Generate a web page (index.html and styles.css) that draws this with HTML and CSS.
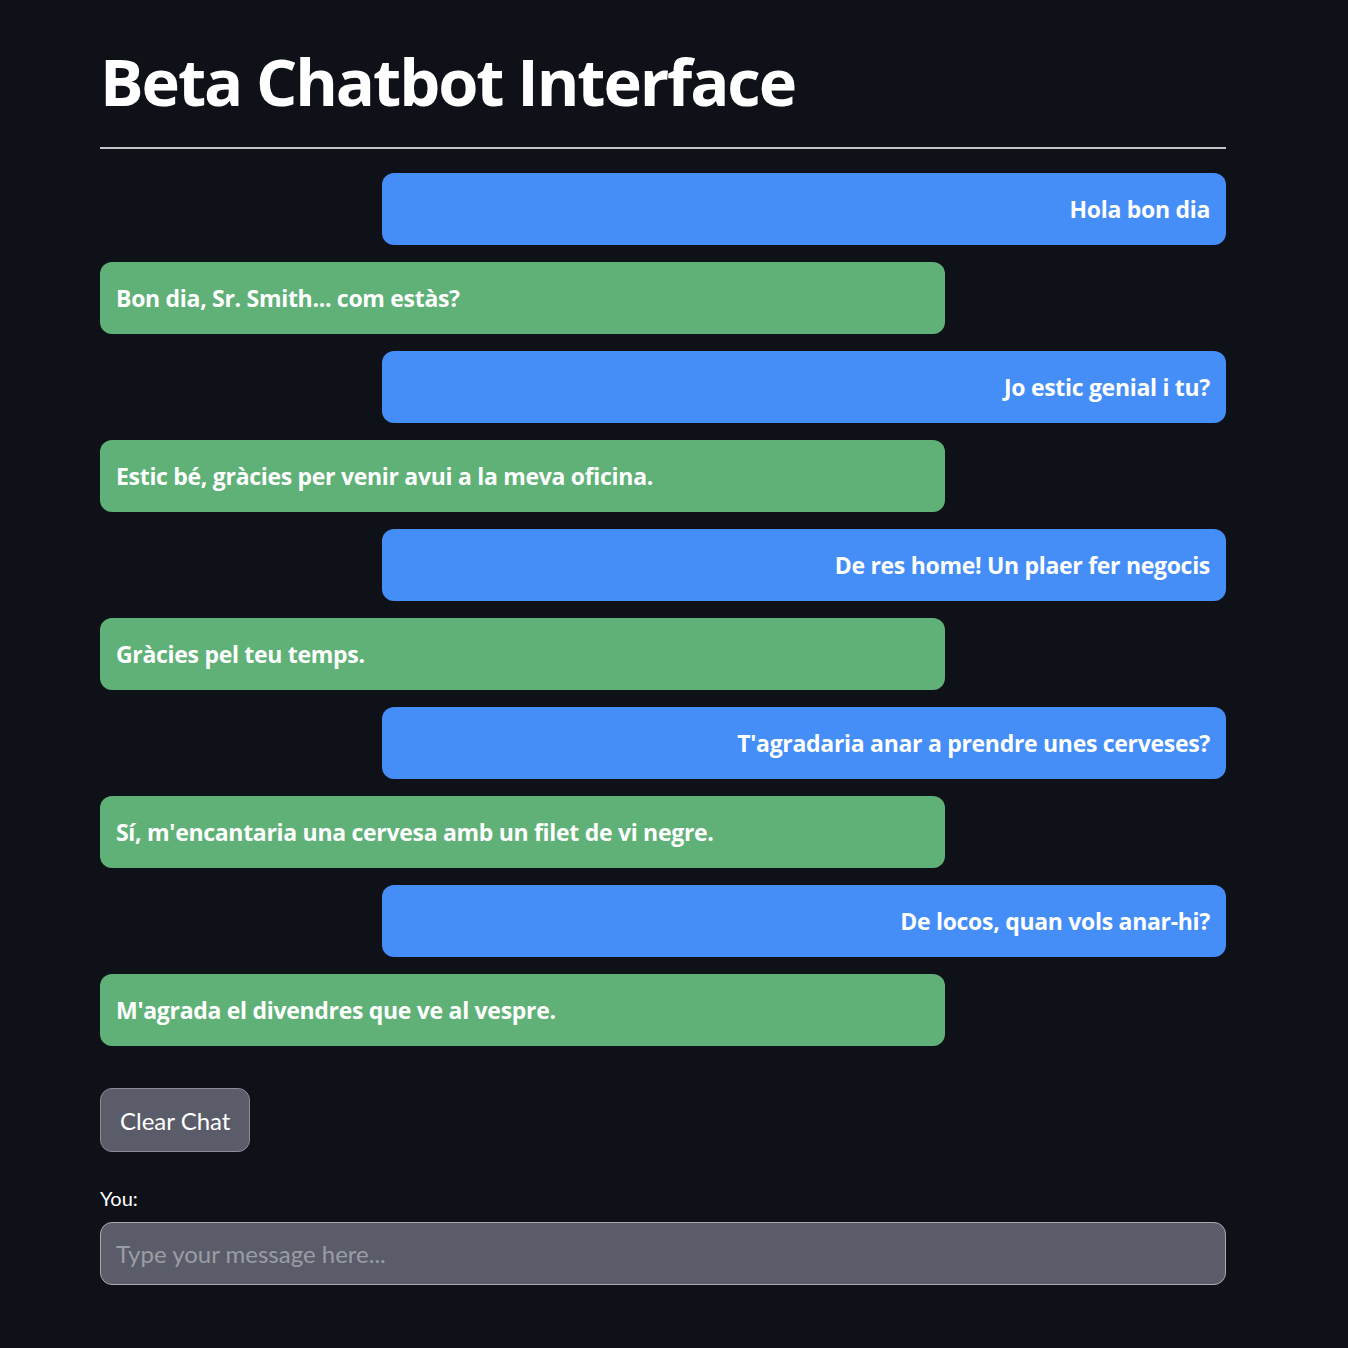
FILE: index.html
```html
<!DOCTYPE html>
<html lang="ca">
<head>
<meta charset="utf-8">
<title>Beta Chatbot Interface</title>
<link rel="stylesheet" href="styles.css">
</head>
<body>
<main class="app">
  <h1 class="title">Beta Chatbot Interface</h1>
  <hr class="divider">
  <section class="chat">
    <div class="msg user">Hola bon dia</div>
    <div class="msg bot">Bon dia, Sr. Smith... com estàs?</div>
    <div class="msg user">Jo estic genial i tu?</div>
    <div class="msg bot">Estic bé, gràcies per venir avui a la meva oficina.</div>
    <div class="msg user">De res home! Un plaer fer negocis</div>
    <div class="msg bot">Gràcies pel teu temps.</div>
    <div class="msg user">T'agradaria anar a prendre unes cerveses?</div>
    <div class="msg bot">Sí, m'encantaria una cervesa amb un filet de vi negre.</div>
    <div class="msg user">De locos, quan vols anar-hi?</div>
    <div class="msg bot">M'agrada el divendres que ve al vespre.</div>
  </section>
  <button class="clear-btn" type="button">Clear Chat</button>
  <label class="input-label" for="msg">You:</label>
  <input class="msg-input" id="msg" type="text" placeholder="Type your message here...">
</main>
</body>
</html>
```
FILE: styles.css
```css
html, body {
  margin: 0;
  padding: 0;
  background: #0e1117;
}
body {
  font-family: Lato, "Noto Sans", sans-serif;
  color: #fafafa;
}
.app {
  width: 1126px;
  margin: 0 0 0 100px;
  display: flex;
  flex-direction: column;
  align-items: flex-start;
}
.title {
  margin: 0;
  padding-top: 39px;
  font-family: "Open Sans", Lato, sans-serif;
  font-size: 65px;
  line-height: 84px;
  font-weight: 700;
  letter-spacing: -2.1px;
  color: #ffffff;
}
.divider {
  align-self: stretch;
  margin: 24px 0 0 0;
  border: 0;
  height: 2px;
  background: #c4c4c6;
}
.chat {
  align-self: stretch;
  display: flex;
  flex-direction: column;
  gap: 17px;
  margin-top: 24px;
}
.msg {
  width: 75%;
  box-sizing: border-box;
  height: 72px;
  display: flex;
  align-items: center;
  padding: 0 16px;
  border-radius: 12px;
  font-family: "Open Sans", Lato, sans-serif;
  font-size: 23px;
  font-weight: 700;
  letter-spacing: -0.3px;
  color: #ffffff;
}
.msg.user {
  align-self: flex-end;
  justify-content: flex-end;
  background: #458ef7;
}
.msg.bot {
  align-self: flex-start;
  background: #5fb178;
}
.clear-btn {
  margin-top: 42px;
  height: 64px;
  padding: 0 19px;
  border-radius: 12px;
  border: 1px solid #8a8c96;
  background: #5a5c69;
  color: #ffffff;
  font-family: inherit;
  font-size: 24px;
  font-weight: 400;
}
.input-label {
  margin-top: 33px;
  font-size: 20px;
  line-height: 26px;
  color: #ffffff;
}
.msg-input {
  align-self: stretch;
  margin-top: 11px;
  box-sizing: border-box;
  height: 63px;
  padding: 0 15px;
  border-radius: 12px;
  border: 1px solid #a8aab0;
  background: #5a5c69;
  color: #ffffff;
  font-family: inherit;
  font-size: 24px;
  outline: none;
}
.msg-input::placeholder {
  color: #9a9ca6;
}
```
